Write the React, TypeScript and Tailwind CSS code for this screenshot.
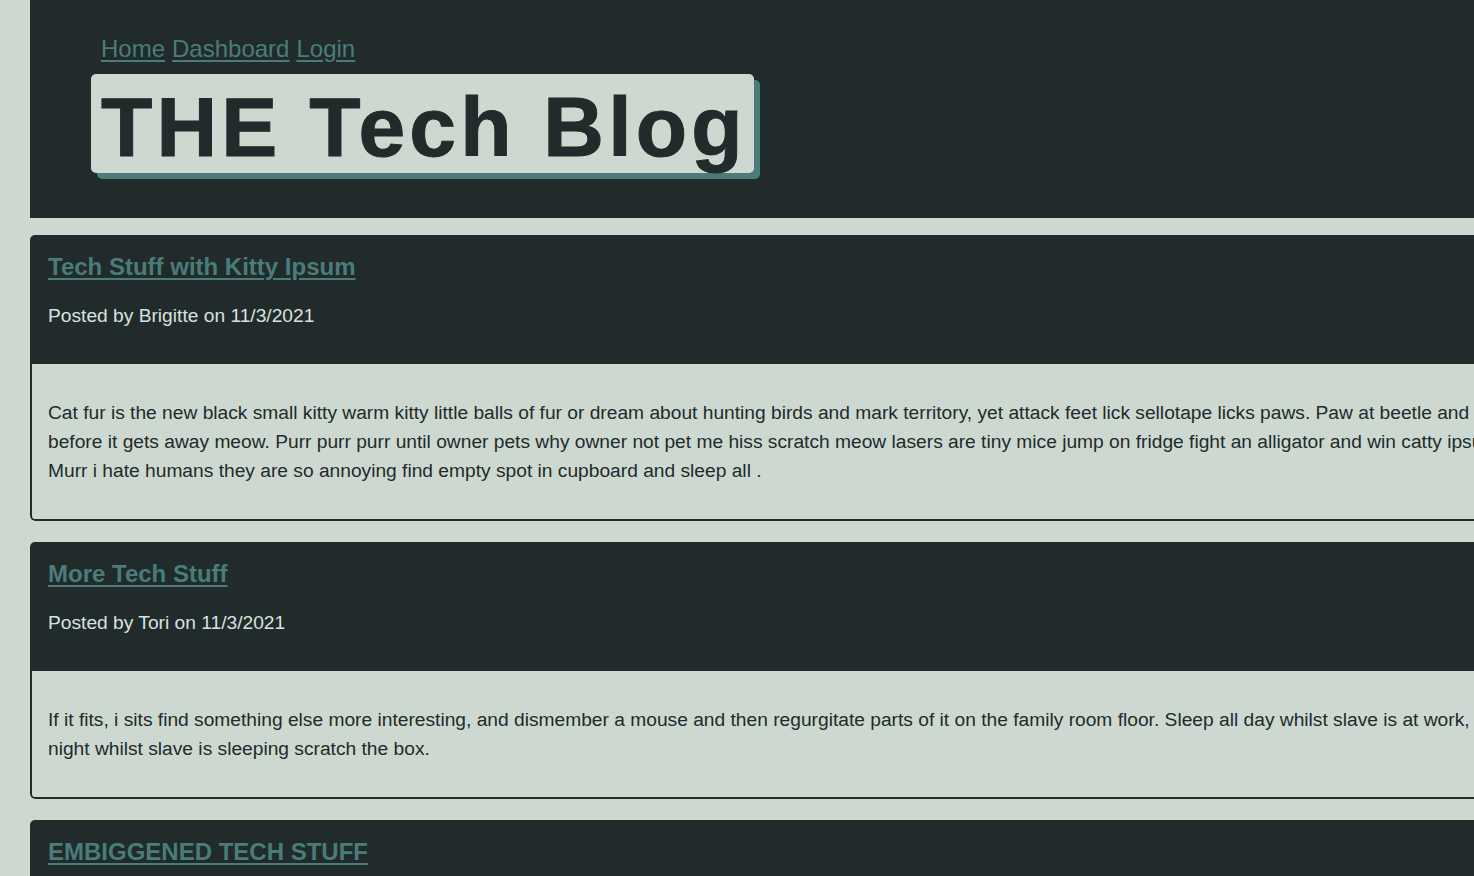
import React from 'react';

interface Post {
    id: number;
    title: string;
    author: string;
    date: string;
    body: string;
}

const posts: Post[] = [
    {
        id: 1,
        title: 'Tech Stuff with Kitty Ipsum',
        author: 'Brigitte',
        date: '11/3/2021',
        body: 'Cat fur is the new black small kitty warm kitty little balls of fur or dream about hunting birds and mark territory, yet attack feet lick sellotape licks paws. Paw at beetle and eat it before it gets away meow. Purr purr purr until owner pets why owner not pet me hiss scratch meow lasers are tiny mice jump on fridge fight an alligator and win catty ipsum. Murr i hate humans they are so annoying find empty spot in cupboard and sleep all .',
    },
    {
        id: 2,
        title: 'More Tech Stuff',
        author: 'Tori',
        date: '11/3/2021',
        body: 'If it fits, i sits find something else more interesting, and dismember a mouse and then regurgitate parts of it on the family room floor. Sleep all day whilst slave is at work, play all night whilst slave is sleeping scratch the box.',
    },
    {
        id: 3,
        title: 'EMBIGGENED TECH STUFF',
        author: 'Brigitte',
        date: '11/4/2021',
        body: 'Knock dish off table head butt cant eat out of my own dish chase ball of string, stare at ceiling light and meow loudly just to annoy owners.',
    },
];

function PostCard({ post }: { post: Post }) {
    return (
        <article className="w-[1525px] rounded-[5px] overflow-hidden">
            {/* Header */}
            <div className="bg-[#212b2c] px-[18px] pt-[18px] pb-[37px]">
                <a href="#" className="block text-[24px] font-bold leading-[28px] text-[#4a7c7a] underline underline-offset-[3px] decoration-2">
                    <span>{post.title}</span>
                </a>
                <p className="mt-[24px] text-[19.2px] leading-[22px] text-[#d8e2dc]">
                    Posted by {post.author} on {post.date}
                </p>
            </div>

            {/* Body */}
            <div className="bg-[#cdd9d0] border-2 border-t-0 border-[#212b2c] rounded-b-[5px] px-4 pt-[34px] pb-[34px]">
                <p className="text-[19.2px] leading-[29px] text-[#212b2c]">{post.body}</p>
            </div>
        </article>
    );
}

export default function App() {
    return (
        <div className="h-screen w-screen overflow-hidden bg-[#cdd9d0] font-['Liberation_Sans',Arial,sans-serif]">
            <div className="ml-[30px] w-[1525px]">
                {/* Header */}
                <header className="bg-[#212b2c] pl-[61px] pt-[35px] pb-[45px]">
                    <nav className="pl-[10px] flex gap-[7px] text-[24px] leading-[27px]">
                        <a href="#" className="text-[#4a7c7a] underline underline-offset-[3px]">Home</a>
                        <a href="#" className="text-[#4a7c7a] underline underline-offset-[3px]">Dashboard</a>
                        <a href="#" className="text-[#4a7c7a] underline underline-offset-[3px]">Login</a>
                    </nav>
                    <div className="mt-[12px] inline-block">
                        <h1 className="bg-[#cdd9d0] rounded-[5px] shadow-[6px_6px_0_#4a7c7a] pl-[10px] pr-[7px] pt-[8px] text-[84px] leading-[91px] font-bold tracking-[4.2px] text-[#212b2c] [-webkit-text-stroke:1px_#212b2c]">
                            THE Tech Blog
                        </h1>
                    </div>
                </header>

                <main className="mt-[17px] flex flex-col gap-[21px]">
                    {posts.map((post) => (
                        <PostCard key={post.id} post={post} />
                    ))}
                </main>
            </div>
        </div>
    );
}
